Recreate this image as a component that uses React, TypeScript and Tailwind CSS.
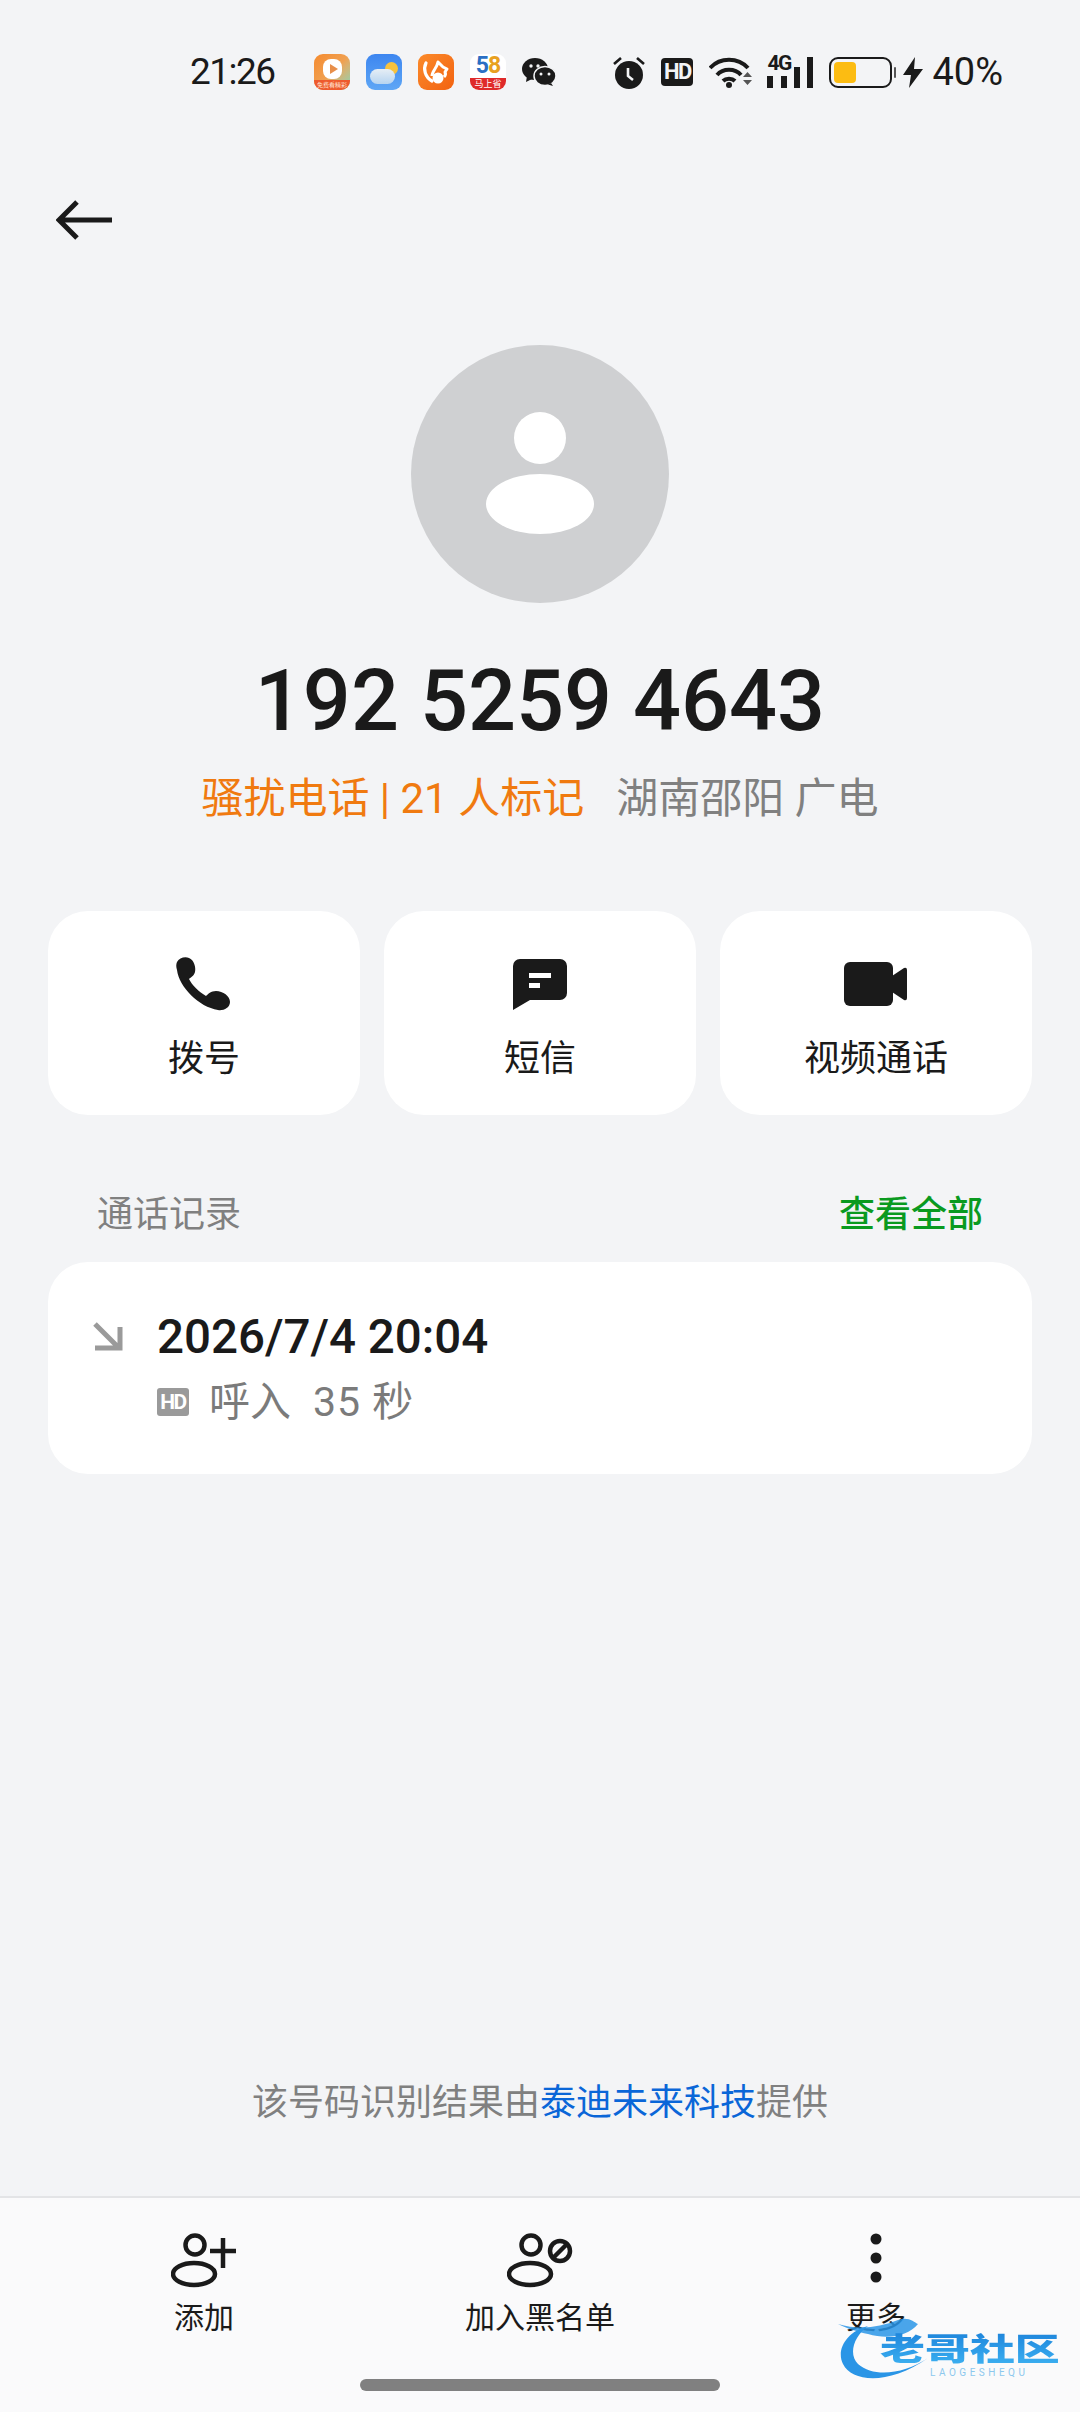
const font = "font-['Roboto','Noto_Sans_CJK_SC',sans-serif]";

function AppIcons() {
  return (
    <div className="flex items-center gap-[16px]">
      <div className="relative h-[36px] w-[36px] overflow-hidden rounded-[9px] bg-gradient-to-br from-[#f58a2c] via-[#f0a050] to-[#6fd6b8]">
        <div className="absolute left-[9px] top-[5px] flex h-[20px] w-[19px] items-center justify-center rounded-[8px] bg-white">
          <div className="ml-[2px] h-0 w-0 border-y-[5px] border-l-[8px] border-y-transparent border-l-[#e88f4a]" />
        </div>
        <div className="absolute bottom-0 h-[10px] w-full bg-[#ee5a2e] text-center text-[6px] leading-[10px] text-[#ffe3cf]">免费看精彩</div>
      </div>
      <div className="relative h-[36px] w-[36px] overflow-hidden rounded-[9px] bg-gradient-to-b from-[#3d86f0] to-[#5ea6f5]">
        <div className="absolute left-[19px] top-[8px] h-[13px] w-[13px] rounded-full bg-[#f7c23e]" />
        <div className="absolute left-[4px] top-[15px] h-[15px] w-[25px] rounded-full bg-gradient-to-b from-[#e6eef5] to-[#b6d4f0]" />
      </div>
      <div className="relative h-[36px] w-[36px] overflow-hidden rounded-[9px] bg-gradient-to-br from-[#fb8a2a] to-[#f2620f]">
        <svg viewBox="0 0 36 36" className="h-full w-full">
          <path d="M8 9c-3 6-1 14 6 18" fill="none" stroke="#fff" strokeWidth="3.200" strokeLinecap="round" />
          <path d="M14 22c0-5 5-8 6-14l5 5 4 2-2 3c1 2 0 4-1 5" fill="none" stroke="#fff" strokeWidth="3" strokeLinejoin="round" />
          <circle cx="20" cy="24" r="5.500" fill="#fff" />
        </svg>
      </div>
      <div className="relative flex h-[36px] w-[36px] flex-col items-center rounded-[9px] bg-white">
        <span className="text-[23px] font-bold leading-[24px] tracking-[-1px]">
          <span className="text-[#2a6fc4]">5</span>
          <span className="text-[#e8a020]">8</span>
        </span>
        <span className="absolute bottom-0 h-[12px] w-full rounded-b-[9px] bg-[#df2a2a] text-center text-[9px] leading-[12px] text-white">马上省</span>
      </div>
      <svg viewBox="0 0 34 28" className="h-[28px] w-[34px]">
        <ellipse cx="13" cy="11" rx="13" ry="11" fill="#1a1a1a" />
        <path d="M5 18l-1 6 6-3z" fill="#1a1a1a" />
        <ellipse cx="23" cy="18" rx="11" ry="9.500" fill="#1a1a1a" stroke="#f3f4f6" strokeWidth="1.500" />
        <path d="M29 25l2 3-5-1.500z" fill="#1a1a1a" />
        <circle cx="9" cy="8" r="1.700" fill="#f3f4f6" />
        <circle cx="16" cy="8" r="1.700" fill="#f3f4f6" />
        <circle cx="19" cy="16" r="1.500" fill="#f3f4f6" />
        <circle cx="27" cy="16" r="1.500" fill="#f3f4f6" />
      </svg>
    </div>
  );
}

function StatusIcons() {
  return (
    <div className="flex items-center">
      <svg viewBox="0 0 32 33" className="h-[33px] w-[32px]">
        <circle cx="16" cy="19" r="14" fill="#1a1a1a" />
        <path d="M1 8l7-6M31 8l-7-6" stroke="#1a1a1a" strokeWidth="2.600" />
        <path d="M15 12v8l5 4" fill="none" stroke="#f3f4f6" strokeWidth="2.600" />
      </svg>
      <div className="ml-[16px] flex h-[28px] w-[32px] items-center justify-center rounded-[4px] bg-[#1a1a1a] text-[22px] font-bold leading-none tracking-[-1.5px] text-[#f3f4f6]">HD</div>
      <svg viewBox="0 0 44 33" className="ml-[16px] h-[33px] w-[44px]" fill="none" stroke="#1a1a1a" strokeWidth="4">
        <path d="M1 12c10-11 28-11 38 0" />
        <path d="M8 19c6-7 18-7 24 0" />
        <path d="M14 25c3-3 9-3 12 0" />
        <circle cx="20" cy="29" r="3" fill="#1a1a1a" stroke="none" />
        <path d="M34 21h9l-4.500-5zM34 24h9l-4.500 5z" fill="#555" stroke="none" />
      </svg>
      <div className="relative ml-[14px] flex h-[32px] w-[46px] items-end justify-between">
        <span className="absolute -top-[3px] left-0 text-[21px] font-bold leading-[20px] tracking-[-1.5px] text-[#1a1a1a]">4G</span>
        <div className="h-[12px] w-[6px] bg-[#1a1a1a]" />
        <div className="h-[12px] w-[6px] bg-[#1a1a1a]" />
        <div className="h-[21px] w-[6px] bg-[#1a1a1a]" />
        <div className="h-[31px] w-[6px] bg-[#1a1a1a]" />
      </div>
      <div className="ml-[16px] flex items-center">
        <div className="flex h-[31px] w-[63px] items-center rounded-[9px] border-[2px] border-[#1a1a1a] p-[3px]">
          <div className="h-[21px] w-[22px] rounded-[4px] bg-[#fcbc12]" />
        </div>
        <div className="ml-[2px] h-[11px] w-[2px] rounded-full bg-[#555]" />
      </div>
      <svg viewBox="0 0 20 31" className="ml-[7px] h-[31px] w-[20px]">
        <path d="M12 0L0 18h8l-2 13 14-19h-9z" fill="#1a1a1a" />
      </svg>
    </div>
  );
}

function ActionCard({ label, children }: { label: string; children: React.ReactNode }) {
  return (
    <div className="flex h-[204px] flex-col items-center rounded-[40px] bg-white">
      <div className="mt-[44px] flex h-[58px] w-full items-center justify-center">{children}</div>
      <span className="mt-[21px] text-[36px] leading-[50px] text-[#1a1a1a]">{label}</span>
    </div>
  );
}

function BarItem({ label, children }: { label: string; children: React.ReactNode }) {
  return (
    <div className="flex flex-col items-center">
      <div className="mt-[34px] flex h-[56px] w-full items-center justify-center">{children}</div>
      <span className="mt-[10px] text-[30px] leading-[40px] text-[#1a1a1a]">{label}</span>
    </div>
  );
}

export default function App() {
  return (
    <div className={`relative flex h-[2412px] w-[1080px] flex-col overflow-hidden bg-[#f3f4f6] ${font}`}>
      <div className="flex h-[144px] items-center pl-[190px] pr-[77px]">
        <span className="w-[124px] text-[37px] tracking-[-1.5px] text-[#1a1a1a]">21:26</span>
        <AppIcons />
        <div className="flex-1" />
        <StatusIcons />
        <span className="ml-[9px] text-[38px] text-[#1a1a1a]">40%</span>
      </div>

      <div className="flex h-[152px] items-center pl-[56px]">
        <svg viewBox="0 0 56 40" className="h-[40px] w-[56px]" fill="none" stroke="#1a1a1a" strokeWidth="5">
          <path d="M3 20h53M21 2L3 20l18 18" />
        </svg>
      </div>

      <div className="mt-[49px] flex h-[258px] w-[258px] flex-col items-center self-center rounded-full bg-[#cfd0d2]">
        <div className="mt-[67px] h-[52px] w-[52px] rounded-full bg-white" />
        <div className="mt-[10px] h-[60px] w-[108px] rounded-[50%] bg-white" />
      </div>

      <h1 className="mt-[49px] text-center text-[84.5px] font-medium leading-[100px] text-[#1a1a1a]">192 5259 4643</h1>
      <div className="mt-[22px] flex items-center justify-center text-[42px] leading-[50px]">
        <span className="text-[#f07a10]">骚扰电话 | 21 人标记</span>
        <span className="ml-[32px] text-[#808080]">湖南邵阳 广电</span>
      </div>

      <div className="mx-[48px] mt-[87px] grid grid-cols-3 gap-[24px]">
        <ActionCard label="拨号">
          <svg viewBox="17 15 56 56" className="h-[56px] w-[56px]" fill="#1a1a1a">
            <path d="M18 21C20 17 26 15 30 17C35 19 37 26 36 31C35 35 32 36 30 38C33 44 40 51 47 55C49 53 52 50 57 50C64 50 71 55 71 61C71 67 64 70 59 69C40 66 20 46 18 29C17 26 17 23 18 21z" />
          </svg>
        </ActionCard>
        <ActionCard label="短信">
          <svg viewBox="0 0 54 51" className="h-[51px] w-[54px]">
            <path d="M7 0h40a7 7 0 0 1 7 7v27a7 7 0 0 1-7 7H17L0 51V7a7 7 0 0 1 7-7z" fill="#1a1a1a" />
            <path d="M16 14h22v5H16zM16 24h11v5H16z" fill="#fff" />
          </svg>
        </ActionCard>
        <ActionCard label="视频通话">
          <svg viewBox="0 0 64 44" className="h-[44px] w-[64px]" fill="#1a1a1a">
            <rect x="0" y="0" width="49" height="44" rx="6" />
            <path d="M48 14L60 6q3-1 3 2v28q0 3-3 2L48 30z" />
          </svg>
        </ActionCard>
      </div>

      <div className="mt-[75px] flex h-[50px] items-center justify-between px-[97px]">
        <span className="text-[36px] text-[#808080]">通话记录</span>
        <span className="text-[36px] font-medium text-[#0a9a1f]">查看全部</span>
      </div>

      <div className="mx-[48px] mt-[22px] flex h-[212px] rounded-[40px] bg-white pl-[45px] pt-[60px]">
        <svg viewBox="0 0 30 30" className="h-[30px] w-[30px]" fill="none" stroke="#9a9a9a" strokeWidth="5">
          <path d="M2 2l24 24M2 26h25V5" />
        </svg>
        <div className="ml-[34px] -mt-[10px]">
          <div className="text-[47.5px] font-medium leading-[50px] text-[#1a1a1a]">2026/7/4 20:04</div>
          <div className="mt-[15px] flex items-center">
            <div className="flex h-[28px] w-[32px] items-center justify-center rounded-[3px] bg-[#9a9a9a] text-[21px] font-bold leading-none tracking-[-1.5px] text-white">HD</div>
            <span className="ml-[20px] text-[41px] leading-[50px] text-[#7b7b7b]">呼入</span>
            <span className="ml-[22px] text-[41px] leading-[50px] tracking-[1px] text-[#7b7b7b]">35 秒</span>
          </div>
        </div>
      </div>

      <div className="flex-1" />

      <p className="text-center text-[36px] leading-[50px] text-[#808080]">
        该号码识别结果由<span className="text-[#0a66d8]">泰迪未来科技</span>提供
      </p>

      <div className="relative mt-[68px] grid h-[216px] grid-cols-3 border-t-[2px] border-[#e3e4e6] bg-[#fafafb] px-[36px]">
        <BarItem label="添加">
          <svg viewBox="0 0 66 56" className="h-[56px] w-[66px]" fill="none" stroke="#1a1a1a" strokeWidth="4.500">
            <circle cx="24" cy="13" r="9.500" />
            <ellipse cx="23" cy="42" rx="21" ry="11" />
            <path d="M39 19h26M52 6v30" />
          </svg>
        </BarItem>
        <BarItem label="加入黑名单">
          <svg viewBox="0 0 66 56" className="h-[56px] w-[66px]" fill="none" stroke="#1a1a1a" strokeWidth="4.500">
            <circle cx="24" cy="13" r="9.500" />
            <ellipse cx="23" cy="42" rx="21" ry="11" />
            <circle cx="53" cy="19" r="10" />
            <path d="M46 26l14-14" />
          </svg>
        </BarItem>
        <BarItem label="更多">
          <svg viewBox="0 0 12 54" className="h-[54px] w-[12px]" fill="#1a1a1a">
            <circle cx="6" cy="6" r="5.500" />
            <circle cx="6" cy="25" r="5.500" />
            <circle cx="6" cy="44" r="5.500" />
          </svg>
        </BarItem>

        {/* home indicator */}
        <div className="absolute bottom-[21px] left-[360px] h-[12px] w-[360px] rounded-full bg-[#808080]" />

        {/* forum watermark */}
        <div className="absolute left-[838px] top-[116px] h-[72px] w-[224px]">
          <svg viewBox="0 0 224 72" className="absolute inset-0 h-full w-full" fill="#2a95e6">
            <path d="M30 12C8 18-2 36 5 50C14 68 50 72 90 44C66 60 36 64 20 50C10 40 16 22 30 12z" />
            <path d="M0 10C20 16 40 14 60 6C70 2 76 8 80 10C70 22 50 26 30 20C20 18 8 14 0 10z" opacity="0.85" />
          </svg>
          <span className="absolute left-[42px] top-[19px] origin-left scale-x-[1.45] bg-gradient-to-b from-[#1f86dc] to-[#3db2f2] bg-clip-text text-[31px] font-black leading-[34px] tracking-[0px] whitespace-nowrap text-transparent">老哥社区</span>
          <span className="absolute left-[92px] top-[53px] text-[10px] leading-[12px] tracking-[3.5px] text-[#8cc8ee]">LAOGESHEQU</span>
        </div>
      </div>
    </div>
  );
}
